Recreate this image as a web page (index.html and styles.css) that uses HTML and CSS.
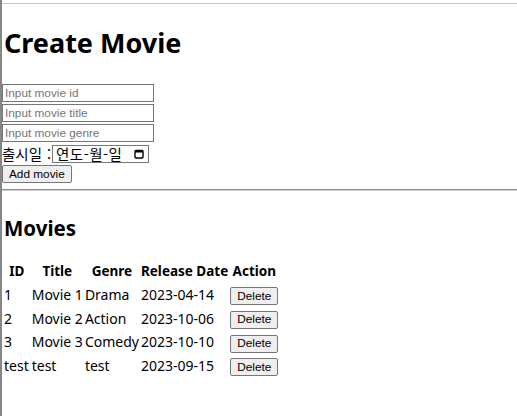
FILE: index.html
```html
<!DOCTYPE html>
<html lang="ko">
<head>
<meta charset="utf-8">
<title>Create Movie</title>
<link rel="stylesheet" href="styles.css">
</head>
<body>
<div class="page">
  <div class="topline"></div>
  <h1 class="title">Create Movie</h1>
  <form class="form">
    <input class="field" type="text" placeholder="Input movie id">
    <input class="field" type="text" placeholder="Input movie title">
    <input class="field" type="text" placeholder="Input movie genre">
    <div class="date-row">
      <span class="date-label">출시일 :</span>
      <span class="date-box">
        <span class="date-text">연도-월-일</span>
        <svg class="cal" width="10" height="10" viewBox="0 0 10 10"><rect x="1" y="1.5" width="8" height="7.5" rx="1" fill="none" stroke="#000" stroke-width="1.4"/><rect x="1" y="1" width="8" height="2.5" fill="#000"/></svg>
      </span>
    </div>
    <button class="btn add" type="button">Add movie</button>
  </form>
  <hr class="rule">
  <h2 class="subtitle">Movies</h2>
  <table class="movies">
    <thead>
      <tr><th>ID</th><th>Title</th><th>Genre</th><th>Release Date</th><th>Action</th></tr>
    </thead>
    <tbody>
      <tr><td>1</td><td>Movie 1</td><td>Drama</td><td>2023-04-14</td><td><button class="btn del" type="button">Delete</button></td></tr>
      <tr><td>2</td><td>Movie 2</td><td>Action</td><td>2023-10-06</td><td><button class="btn del" type="button">Delete</button></td></tr>
      <tr><td>3</td><td>Movie 3</td><td>Comedy</td><td>2023-10-10</td><td><button class="btn del" type="button">Delete</button></td></tr>
      <tr><td>test</td><td>test</td><td>test</td><td>2023-09-15</td><td><button class="btn del" type="button">Delete</button></td></tr>
    </tbody>
  </table>
</div>
</body>
</html>
```
FILE: styles.css
```css
html, body {
  margin: 0;
  padding: 0;
  background: #fff;
}
body {
  font-family: "Noto Sans", "Noto Sans CJK KR", sans-serif;
  color: #000;
}
.page {
  border-left: 2px solid #868686;
  min-height: 416px;
  box-sizing: border-box;
  padding-top: 3px;
}
.topline {
  border-top: 1px solid #c6c6c6;
}
.title {
  font-size: 27px;
  font-weight: 700;
  line-height: 36px;
  margin: 21px 0 0 2px;
}
.form {
  margin-top: 23px;
  display: flex;
  flex-direction: column;
  align-items: flex-start;
}
.field {
  width: 152px;
  height: 18px;
  box-sizing: border-box;
  border: 1px solid #767676;
  padding: 0 2px;
  margin: 0 0 2px 0;
  font-family: "Liberation Sans", Arial, sans-serif;
  font-size: 11.8px;
  border-radius: 0;
}
.field::placeholder {
  color: #757575;
}
.date-row {
  display: flex;
  align-items: center;
  height: 19px;
}
.date-label {
  font-family: "Noto Sans CJK KR", sans-serif;
  font-size: 14.5px;
  line-height: 18px;
  width: 50px;
  word-spacing: 1px;
}
.date-box {
  display: flex;
  align-items: center;
  justify-content: space-between;
  width: 97px;
  height: 18px;
  box-sizing: border-box;
  border: 1px solid #767676;
  padding: 0 4px 0 3px;
}
.date-text {
  font-family: "Noto Sans CJK KR", sans-serif;
  font-size: 14.5px;
  line-height: 16px;
  letter-spacing: 0.5px;
}
.cal {
  display: block;
}
.btn {
  font-family: "Liberation Sans", Arial, sans-serif;
  font-size: 11.8px;
  color: #000;
  background: #efefef;
  border: 1px solid #767676;
  border-radius: 2px;
  height: 18px;
  padding: 0 6px;
  line-height: 15px;
}
.add {
  margin-top: 2px;
}
.rule {
  margin: 6px 0 0 0;
  border: 0;
  border-top: 1px solid #8a8a8a;
  border-bottom: 1px solid #d0d0d0;
  height: 0;
}
.subtitle {
  font-size: 20.5px;
  font-weight: 700;
  line-height: 28px;
  margin: 23px 0 0 2px;
}
.movies {
  margin: 17px 0 0 0;
  border-spacing: 2px;
  font-size: 14px;
}
.movies th, .movies td {
  padding: 0 0 1px 0;
  line-height: 20.75px;
  vertical-align: middle;
}
.movies th {
  font-weight: 700;
  font-size: 13.5px;
  text-align: center;
}
.movies td {
  text-align: left;
}
.movies td:first-child {
  padding-right: 1px;
}
.btn.del {
  margin: 0;
  vertical-align: middle;
}
```
